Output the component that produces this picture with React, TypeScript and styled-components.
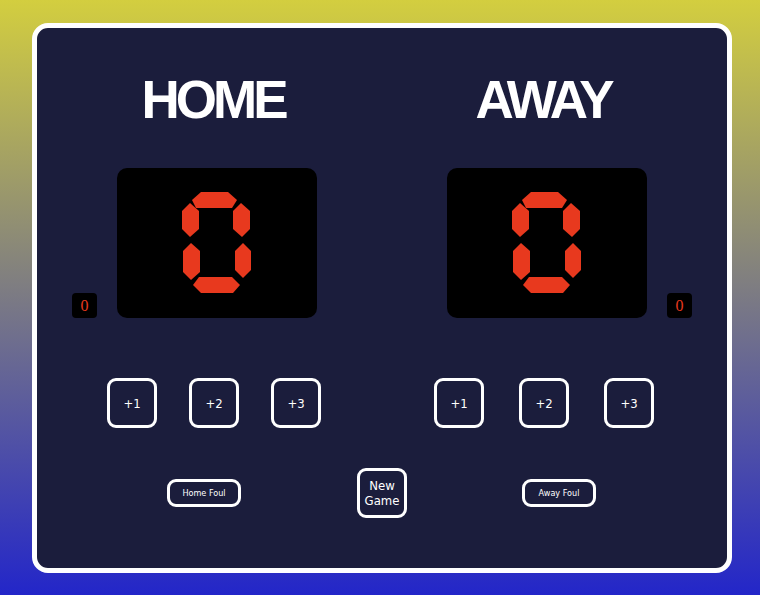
import React from "react";
import styled, { createGlobalStyle } from "styled-components";

const Global = createGlobalStyle`
  html, body { margin: 0; padding: 0; }
  body {
    width: 760px;
    height: 595px;
    overflow: hidden;
    background: linear-gradient(to bottom, #d3ce3f 0%, #2326c9 100%);
    font-family: "DejaVu Sans Condensed", "DejaVu Sans", sans-serif;
  }
`;

const Page = styled.div`
  padding: 23px 0 0 32px;
`;

const Card = styled.div`
  box-sizing: border-box;
  width: 700px;
  height: 550px;
  border: 5px solid #ffffff;
  border-radius: 16px;
  background: #1b1d3c;
  display: flex;
  flex-direction: column;
`;

const TeamsRow = styled.div`
  display: flex;
  padding: 45px 0 0 35px;
  gap: 130px;
`;

const Team = styled.div<{ $reverse?: boolean }>`
  display: grid;
  grid-template-columns: ${(p) => (p.$reverse ? "200px 25px" : "25px 200px")};
  grid-template-rows: auto auto;
  column-gap: 20px;
  row-gap: 42px;
`;

const Title = styled.h1<{ $col: number }>`
  grid-column: ${(p) => p.$col};
  grid-row: 1;
  margin: 0;
  padding-right: 8px;
  font-family: "Liberation Sans", Arial, sans-serif;
  font-weight: 700;
  font-size: 53px;
  line-height: 1;
  letter-spacing: -4px;
  color: #ffffff;
  text-align: center;
`;

const ScoreBox = styled.div<{ $col: number }>`
  grid-column: ${(p) => p.$col};
  grid-row: 2;
  width: 200px;
  height: 150px;
  border-radius: 10px;
  background: #000000;
  display: flex;
  align-items: center;
  justify-content: center;
`;

const FoulBox = styled.div<{ $col: number }>`
  grid-column: ${(p) => p.$col};
  grid-row: 2;
  align-self: end;
  width: 25px;
  height: 25px;
  border-radius: 4px;
  background: #000000;
  color: #e8391e;
  font-family: "Liberation Serif", "Times New Roman", serif;
  font-size: 16px;
  display: flex;
  align-items: center;
  justify-content: center;
`;

const ButtonsRow = styled.div`
  display: flex;
  align-items: center;
  padding: 60px 0 0 70px;
`;

const Group = styled.div<{ $gap: number; $ml?: number }>`
  display: flex;
  gap: ${(p) => p.$gap}px;
  margin-left: ${(p) => p.$ml ?? 0}px;
`;

const SquareButton = styled.button`
  box-sizing: border-box;
  width: 50px;
  height: 50px;
  border: 3px solid #ffffff;
  border-radius: 9px;
  background: transparent;
  color: #ffffff;
  font-family: "DejaVu Sans Condensed", "DejaVu Sans", sans-serif;
  font-size: 13px;
  line-height: 15px;
  padding: 0;
  display: flex;
  align-items: center;
  justify-content: center;
  text-align: center;
`;

const BottomRow = styled.div`
  display: flex;
  align-items: center;
  padding: 40px 0 0 130px;
`;

const FoulButton = styled.button<{ $ml?: number }>`
  box-sizing: border-box;
  width: 74px;
  height: 28px;
  margin-left: ${(p) => p.$ml ?? 0}px;
  border: 3px solid #ffffff;
  border-radius: 9px;
  background: transparent;
  color: #ffffff;
  font-family: "DejaVu Sans Condensed", "DejaVu Sans", sans-serif;
  font-size: 9px;
  padding: 0;
`;

const NewGame = styled(SquareButton)<{ $ml?: number }>`
  margin-left: ${(p) => p.$ml ?? 0}px;
`;

const SegmentDigit: React.FC = () => (
  <svg width="70" height="102" viewBox="0 0 70 102">
    <g fill="#e8391e">
      <polygon points="10,8 19,0 46,0 55,8 50,16 14,16" />
      <polygon points="8,11 17,19 17,37 8,45 0,37 0,19" />
      <polygon points="59,11 68,19 68,37 60,45 51,37 51,19" />
      <polygon points="9,51 18,59 18,80 9,88 1,80 1,59" />
      <polygon points="61,51 69,59 69,78 61,86 53,78 53,59" />
      <polygon points="17,85 50,85 58,93 51,101 19,101 11,93" />
    </g>
  </svg>
);

export default function App() {
  return (
    <>
      <Global />
      <Page>
        <Card>
          <TeamsRow>
            <Team>
              <Title $col={2}>HOME</Title>
              <FoulBox $col={1}>0</FoulBox>
              <ScoreBox $col={2}>
                <SegmentDigit />
              </ScoreBox>
            </Team>
            <Team $reverse>
              <Title $col={1}>AWAY</Title>
              <ScoreBox $col={1}>
                <SegmentDigit />
              </ScoreBox>
              <FoulBox $col={2}>0</FoulBox>
            </Team>
          </TeamsRow>
          <ButtonsRow>
            <Group $gap={32}>
              <SquareButton>+1</SquareButton>
              <SquareButton>+2</SquareButton>
              <SquareButton>+3</SquareButton>
            </Group>
            <Group $gap={35} $ml={113}>
              <SquareButton>+1</SquareButton>
              <SquareButton>+2</SquareButton>
              <SquareButton>+3</SquareButton>
            </Group>
          </ButtonsRow>
          <BottomRow>
            <FoulButton>Home Foul</FoulButton>
            <NewGame $ml={116}>
              New
              <br />
              Game
            </NewGame>
            <FoulButton $ml={115}>Away Foul</FoulButton>
          </BottomRow>
        </Card>
      </Page>
    </>
  );
}
